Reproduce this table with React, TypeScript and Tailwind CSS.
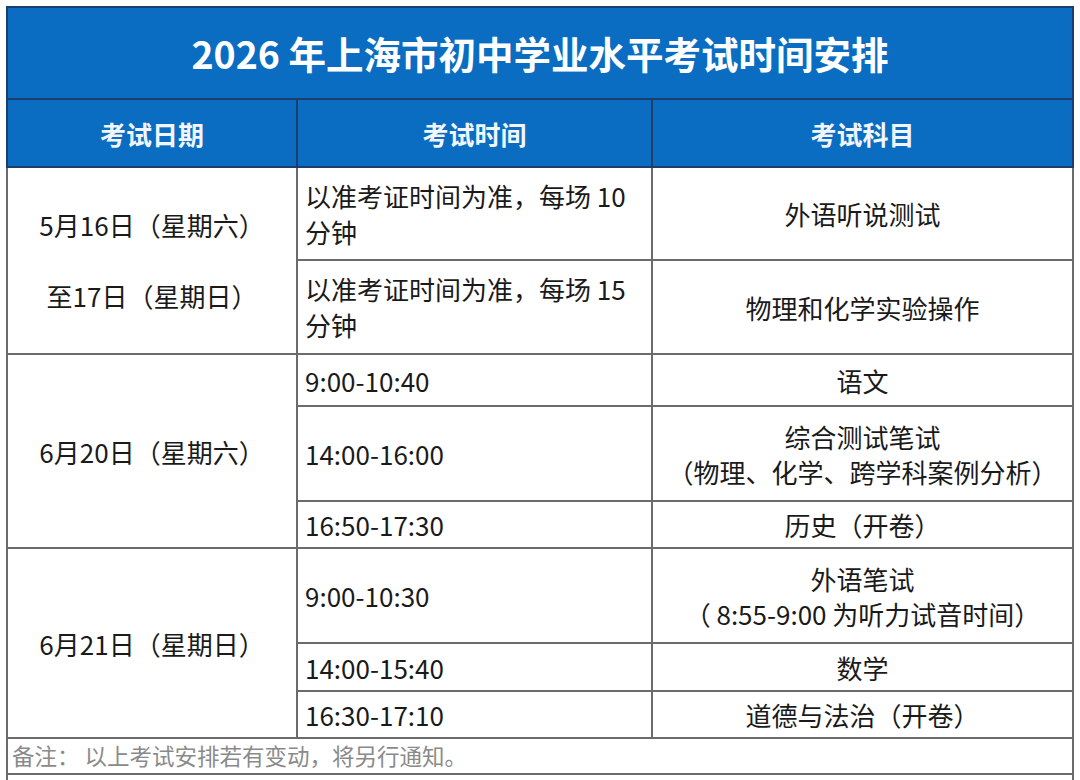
import React from "react";

const font = { fontFamily: '"Noto Sans CJK SC", "Noto Sans", sans-serif' };

function C({ children, className = "" }: { children?: React.ReactNode; className?: string }) {
  return <div className={`bg-white flex items-center text-[26px] text-[#1a1a1a] ${className}`}>{children}</div>;
}

export default function App() {
  return (
    <div className="w-[1080px] h-[780px] overflow-hidden bg-white pt-[6px] pl-[6px]" style={font}>
      <div className="w-[1068px]">
        {/* blue header section */}
        <div className="bg-[#1b3e6c] p-[2px] grid grid-cols-[288px_353px_419px] grid-rows-[90px_66px] gap-[2px]">
          <div className="col-span-3 bg-[#0a6dc1] flex items-center justify-center text-white font-bold text-[37.5px]">
            2026 年上海市初中学业水平考试时间安排
          </div>
          <div className="bg-[#0a6dc1] flex items-center justify-center text-[#f2f6fc] font-bold text-[26px]">考试日期</div>
          <div className="bg-[#0a6dc1] flex items-center justify-center text-[#f2f6fc] font-bold text-[26px]">考试时间</div>
          <div className="bg-[#0a6dc1] flex items-center justify-center text-[#f2f6fc] font-bold text-[26px]">考试科目</div>
        </div>
        {/* body */}
        <div className="bg-[#6b6b6b] px-[2px] pb-[2px] grid grid-cols-[288px_353px_419px] grid-rows-[91px_92px_50px_93px_45px_93px_46px_45px_34px_40px] gap-[2px]">
          <C className="row-span-2 flex-col justify-center gap-[35px] leading-[36px]">
            <div>5月16日（星期六）</div>
            <div>至17日（星期日）</div>
          </C>
          <C className="pl-[7px] leading-[36px]">
            <div>以准考证时间为准，每场 10<br />分钟</div>
          </C>
          <C className="justify-center">外语听说测试</C>
          <C className="pl-[7px] leading-[36px]">
            <div>以准考证时间为准，每场 15<br />分钟</div>
          </C>
          <C className="justify-center">物理和化学实验操作</C>

          <C className="row-span-3 justify-center">6月20日（星期六）</C>
          <C className="pl-[7px]">9:00-10:40</C>
          <C className="justify-center">语文</C>
          <C className="pl-[7px]">14:00-16:00</C>
          <C className="justify-center text-center leading-[35px]">
            <div>综合测试笔试<br />（物理、化学、跨学科案例分析）</div>
          </C>
          <C className="pl-[7px]">16:50-17:30</C>
          <C className="justify-center">历史（开卷）</C>

          <C className="row-span-3 justify-center">6月21日（星期日）</C>
          <C className="pl-[7px]">9:00-10:30</C>
          <C className="justify-center text-center leading-[35px]">
            <div>外语笔试<br />（ 8:55-9:00 为听力试音时间）</div>
          </C>
          <C className="pl-[7px]">14:00-15:40</C>
          <C className="justify-center">数学</C>
          <C className="pl-[7px]">16:30-17:10</C>
          <C className="justify-center">道德与法治（开卷）</C>

          <div className="col-span-3 bg-white flex items-center pl-[4px] text-[22.5px] text-[#8a8a8a]">
            备注： 以上考试安排若有变动，将另行通知。
          </div>
          <div className="col-span-3 bg-white"></div>
        </div>
      </div>
    </div>
  );
}
